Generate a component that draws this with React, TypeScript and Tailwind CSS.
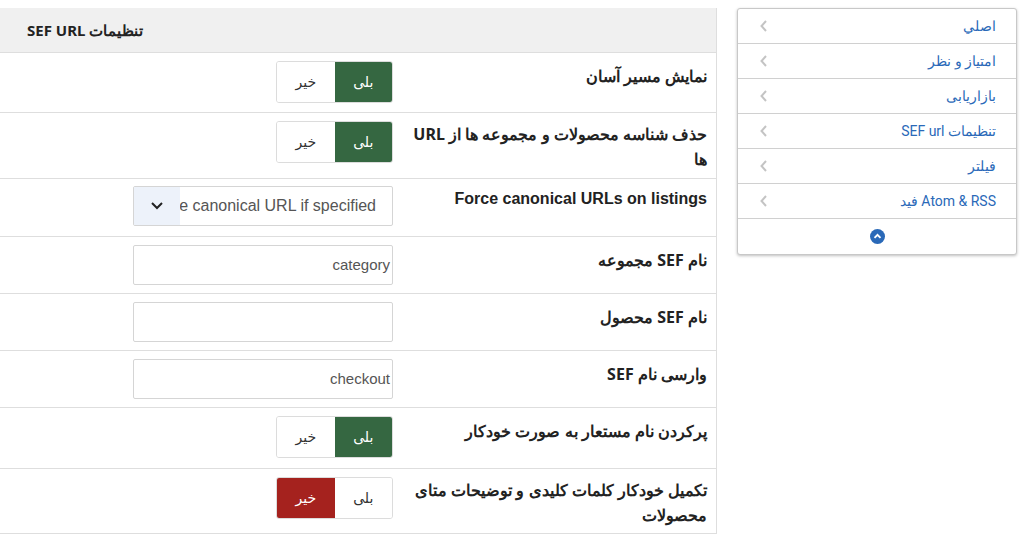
import React from "react";

const Toggle = ({ yes }: { yes: boolean }) => (
  <div className="flex h-[42px] w-[117px] border border-[#dcdcdc] rounded-[3px] overflow-hidden text-[14px]" style={{ fontFamily: "Tahoma, 'DejaVu Sans', sans-serif" }}>
    <div className={`w-1/2 flex items-center justify-center ${yes ? "bg-[#356741] text-white" : "bg-white text-[#333]"}`}>بلی</div>
    <div className={`w-1/2 flex items-center justify-center ${!yes ? "bg-[#a5221e] text-white" : "bg-white text-[#333]"}`}>خیر</div>
  </div>
);

const Input = ({ v }: { v: string }) => (
  <div className="h-[40px] w-[260px] border border-[#d5d5d5] rounded-[2px] bg-white flex items-center px-[2px] text-[15px] text-[#555]" style={{ fontFamily: "'Liberation Sans', Arial, sans-serif" }}>{v}</div>
);

const Row = ({ label, h, children }: { label: React.ReactNode; h: number; children: React.ReactNode }) => (
  <div className="flex border-t border-[#dedede]" style={{ height: h }}>
    <div className="w-[323px] pr-[9px] pl-[10px] pt-[11px] font-bold text-[16px] leading-[25px] text-[#222]" style={{ fontFamily: "'Noto Sans', sans-serif" }}>{label}</div>
    <div className="pt-[8px]">{children}</div>
  </div>
);

const items = ["اصلي", "امتیاز و نظر", "بازاریابی", "تنظیمات SEF url", "فیلتر", "Atom & RSS فید"];

export default function App() {
  return (
    <div dir="rtl" className="w-[1023px] h-[540px] bg-white flex pt-[8px] pr-[6px] gap-[20px]" style={{ fontFamily: "'Noto Sans', sans-serif" }}>
      <div className="w-[280px] h-[247px] border border-[#c8c8c8] rounded-[3px] shadow-[0_1px_3px_rgba(0,0,0,0.25)] bg-white shrink-0">
        {items.map((t) => (
          <div key={t} className="h-[35px] border-b border-[#d0d0d0] flex items-center justify-between pr-[20px] pl-[22px] text-[14px] text-[#2a69b8]" style={{ fontFamily: "Roboto, sans-serif" }}>
            <span>{t}</span>
            <svg width="8" height="12" viewBox="0 0 8 12"><path d="M6 1 L1.5 6 L6 11" stroke="#c4c4c4" strokeWidth="2" fill="none" /></svg>
          </div>
        ))}
        <div className="h-[35px] flex items-center justify-center">
          <svg width="15" height="15" viewBox="0 0 16 16"><circle cx="8" cy="8" r="8" fill="#2a69b8" /><path d="M4.8 9.5 L8 6.3 L11.2 9.5" stroke="white" strokeWidth="2" fill="none" /></svg>
        </div>
      </div>
      <div className="w-[717px] h-[526px] border-r border-b border-[#dedede] shrink-0">
        <div className="h-[44px] bg-[#f0f0f0] flex items-center justify-end pl-[27px] font-bold text-[15px] text-[#222]" style={{ fontFamily: "'Noto Sans', sans-serif" }}>تنظیمات SEF URL</div>
        <Row label="نمایش مسیر آسان" h={60}><Toggle yes /></Row>
        <Row label={<span className="block -mt-[2px]">حذف شناسه محصولات و مجموعه ها از URL ها</span>} h={66}><Toggle yes /></Row>
        <Row label={<span dir="ltr" className="block text-right -mt-[4px]" style={{ fontFamily: "'Liberation Sans', sans-serif" }}>Force canonical URLs on listings</span>} h={58}>
          <div className="h-[40px] w-[260px] border border-[#d5d5d5] rounded-[2px] bg-white flex items-center text-[16px] text-[#555] overflow-hidden -mt-[1px]" style={{ fontFamily: "'Liberation Sans', sans-serif" }}>
            <div className="flex-1 overflow-hidden whitespace-nowrap pr-[16px]">Use canonical URL if specified</div>
            <div className="w-[46px] h-full bg-[#edf2fa] flex items-center justify-center shrink-0">
              <svg width="14" height="10" viewBox="0 0 14 10"><path d="M2 2 L7 7 L12 2" stroke="#222" strokeWidth="2" fill="none" /></svg>
            </div>
          </div>
        </Row>
        <Row label="نام SEF مجموعه" h={57}><Input v="category" /></Row>
        <Row label="نام SEF محصول" h={57}><Input v="" /></Row>
        <Row label="وارسی نام SEF" h={57}><Input v="checkout" /></Row>
        <Row label="پرکردن نام مستعار به صورت خودکار" h={61}><Toggle yes /></Row>
        <Row label={<span className="block -mt-[2px]">تکمیل خودکار کلمات کلیدی و توضیحات متای محصولات</span>} h={65}><Toggle yes={false} /></Row>
      </div>
    </div>
  );
}
